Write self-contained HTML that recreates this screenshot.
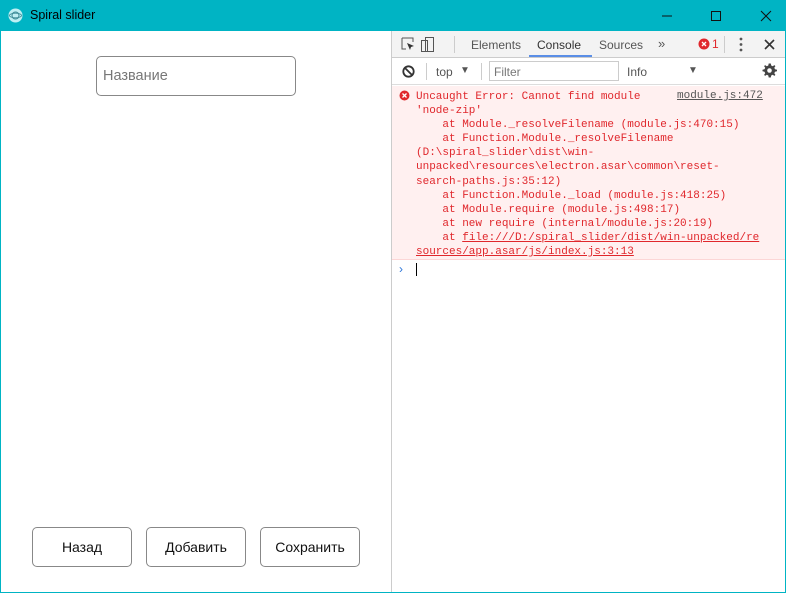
<!DOCTYPE html>
<html><head><meta charset="utf-8"><style>
*{margin:0;padding:0;box-sizing:border-box}
body{width:786px;height:593px;position:relative;overflow:hidden;background:#00b4c4;font-family:"Liberation Sans","Noto Sans CJK SC",sans-serif}
.abs{position:absolute}
#title{left:0;top:0;width:786px;height:31px;background:#00b4c4}
#title .t{left:30px;top:8px;font-size:12.5px;color:#000}
#main{left:1px;top:31px;width:390px;height:561px;background:#fff}
#dt{left:391px;top:31px;width:394px;height:561px;background:#fff;border-left:1px solid #ccc}
.inp{left:96px;top:56px;width:200px;height:40px;border:1px solid #888;border-radius:5px;background:#fff;font-size:14.5px;color:#777;padding:11px 0 0 6px}
.btn{top:527px;width:100px;height:40px;border:1px solid #888;border-radius:5px;background:#fff;font-size:14px;color:#111;text-align:center;line-height:39px}
.tb{left:392px;top:31px;width:393px;height:27px;background:#f3f3f3;border-bottom:1px solid #ccc;font-size:12px;color:#555}
.tb2{left:392px;top:58px;width:393px;height:27px;background:#fff;border-bottom:1px solid #ddd;font-size:12px;color:#555}
.err{left:392px;top:86px;width:393px;height:174px;background:#fff0f0;border-bottom:1px solid #fcd6d6;font-family:"Liberation Mono",monospace;font-size:11px;color:#e0272c;line-height:14.1px;padding:4px 0 0 24px;white-space:pre}
.u{text-decoration:underline}
</style></head><body>
<div id="title" class="abs">
<svg class="abs" style="left:8px;top:8px" width="15" height="15"><circle cx="7.5" cy="7.5" r="7" fill="#bfeff3"/><circle cx="7.5" cy="7.5" r="3.5" fill="none" stroke="#3a8a95" stroke-width="1"/><ellipse cx="7.5" cy="7.5" rx="6" ry="2.3" fill="none" stroke="#3a8a95" stroke-width=".8"/></svg>
<div class="abs t">Spiral slider</div>
<svg class="abs" style="left:660px;top:8px" width="120" height="16"><path d="M2 8h10" stroke="#111"/><rect x="51.5" y="3.5" width="9" height="9" fill="none" stroke="#111"/><path d="M101 3l10 10M111 3l-10 10" stroke="#111"/></svg>
</div>
<div id="main" class="abs"></div>
<div id="dt" class="abs"></div>
<div class="abs inp">Название</div>
<div class="abs btn" style="left:32px">Назад</div>
<div class="abs btn" style="left:146px">Добавить</div>
<div class="abs btn" style="left:260px">Сохранить</div>
<div class="abs tb">
<svg class="abs" style="left:9px;top:6px" width="34" height="16"><path d="M1 1h11v4M1 1v11h4" fill="none" stroke="#555"/><path d="M6 6l7 3-3 1-1 3z" fill="#333"/><rect x="20.5" y="3.5" width="6" height="11" fill="none" stroke="#555"/><rect x="24.5" y="0.5" width="8" height="14" fill="none" stroke="#555"/></svg>
<div class="abs" style="left:62px;top:5px;width:1px;height:17px;background:#ccc"></div>
<div class="abs" style="left:79px;top:7px">Elements</div>
<div class="abs" style="left:145px;top:7px;color:#333">Console</div>
<div class="abs" style="left:137px;top:24px;width:63px;height:2px;background:#5a8ee6"></div>
<div class="abs" style="left:207px;top:7px">Sources</div>
<div class="abs" style="left:266px;top:5px;font-size:13px">»</div>
<svg class="abs" style="left:306px;top:7px" width="12" height="12"><circle cx="6" cy="6" r="5.5" fill="#e0272c"/><path d="M4 4l4 4M8 4l-4 4" stroke="#fff" stroke-width="1.3"/></svg>
<div class="abs" style="left:320px;top:6px;color:#e0272c">1</div>
<div class="abs" style="left:332px;top:5px;width:1px;height:17px;background:#ccc"></div>
<svg class="abs" style="left:346px;top:6px" width="6" height="16"><circle cx="3" cy="2" r="1.4" fill="#555"/><circle cx="3" cy="7.5" r="1.4" fill="#555"/><circle cx="3" cy="13" r="1.4" fill="#555"/></svg>
<svg class="abs" style="left:372px;top:8px" width="11" height="11"><path d="M1 1l9 9M10 1l-9 9" stroke="#333" stroke-width="1.6"/></svg>
</div>
<div class="abs tb2">
<svg class="abs" style="left:10px;top:7px" width="13" height="13"><circle cx="6.5" cy="6.5" r="5.2" fill="none" stroke="#333" stroke-width="1.8"/><path d="M3 3l7 7" stroke="#333" stroke-width="1.8"/></svg>
<div class="abs" style="left:34px;top:5px;width:1px;height:17px;background:#ccc"></div>
<div class="abs" style="left:44px;top:7px">top</div>
<div class="abs" style="left:68px;top:7px;font-size:10px">▼</div>
<div class="abs" style="left:89px;top:5px;width:1px;height:17px;background:#ccc"></div>
<div class="abs" style="left:97px;top:3px;width:130px;height:20px;border:1px solid #ccc;color:#777;padding:3px 0 0 4px">Filter</div>
<div class="abs" style="left:235px;top:7px;color:#555">Info</div>
<div class="abs" style="left:296px;top:7px;font-size:10px;color:#555">▼</div>
<svg class="abs" style="left:370px;top:5px" width="15" height="15" viewBox="0 0 15 15"><path d="M7.5 0.5l1.3 0 .4 2 1.5.7 1.7-1.1 1 1-1.1 1.7.7 1.5 2 .4v1.6l-2 .4-.7 1.5 1.1 1.7-1 1-1.7-1.1-1.5.7-.4 2H6.7l-.4-2-1.5-.7-1.700 1.1-1-1 1.1-1.7-.7-1.5-2-.4V6.7l2-.4.7-1.5-1.1-1.7 1-1 1.7 1.1 1.5-.7.4-2z" fill="#444"/><circle cx="7.5" cy="7.5" r="2.3" fill="#fff"/></svg>
</div>
<div class="abs err">Uncaught Error: Cannot find module
'node-zip'
    at Module._resolveFilename (module.js:470:15)
    at Function.Module._resolveFilename
(D:\spiral_slider\dist\win-
unpacked\resources\electron.asar\common\reset-
search-paths.js:35:12)
    at Function.Module._load (module.js:418:25)
    at Module.require (module.js:498:17)
    at new require (internal/module.js:20:19)
    at <span class="u">file:///D:/spiral_slider/dist/win-unpacked/re</span>
<span class="u">sources/app.asar/js/index.js:3:13</span></div>
<svg class="abs" style="left:399px;top:90px" width="11" height="11"><circle cx="5.5" cy="5.5" r="5" fill="#e0272c"/><path d="M3.5 3.5l4 4M7.5 3.5l-4 4" stroke="#fff" stroke-width="1.3"/></svg>
<div class="abs" style="left:677px;top:90px;font-family:'Liberation Mono',monospace;font-size:11px;color:#555;text-decoration:underline">module.js:472</div>
<div class="abs" style="left:399px;top:262px;color:#2a74d8;font-size:12px">›</div>
<div class="abs" style="left:416px;top:263px;width:1px;height:13px;background:#000"></div>
</body></html>
